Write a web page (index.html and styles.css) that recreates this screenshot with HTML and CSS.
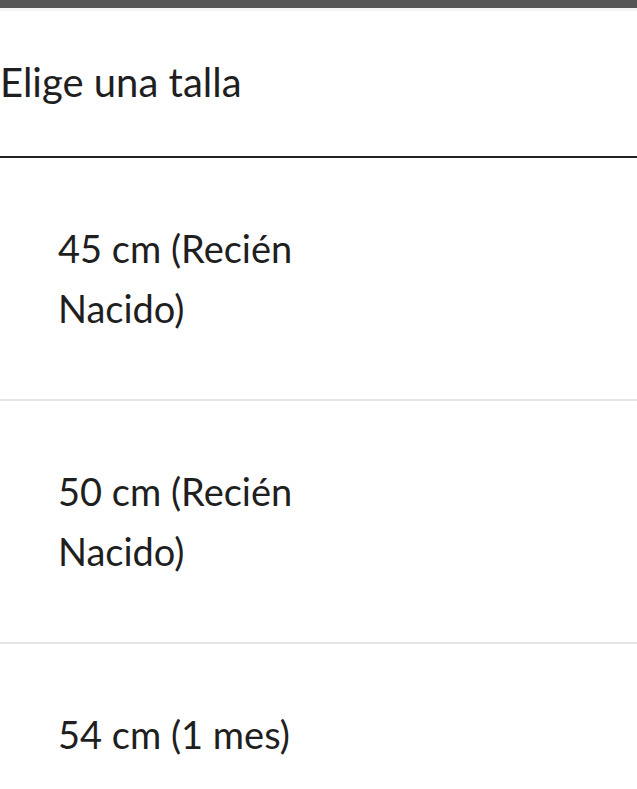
FILE: index.html
```html
<!DOCTYPE html>
<html>
  <head>
    <title>Elige una talla</title>
    <meta charset="UTF-8">
    <meta name="viewport" content="width=device-width,initial-scale=1">
    <link rel="stylesheet" href="styles.css">
  </head>
  <body>
    <div class="top_bar"></div>
    <div class="size_picker">
      <h2 class="picker_title">Elige una talla</h2>
      <ul class="size_list">
        <li class="size_item"><span class="size_label">45 cm (Recién Nacido)</span></li>
        <li class="size_item"><span class="size_label">50 cm (Recién Nacido)</span></li>
        <li class="size_item"><span class="size_label">54 cm (1 mes)</span></li>
      </ul>
    </div>
  </body>
</html>
```

FILE: styles.css
```css
body
{
  margin: 0;
  padding: 0;
  background-color: #ffffff;
  color: #1f1f1f;
  font-family: "Lato", "Liberation Sans", sans-serif;
  overflow: hidden;
}
.top_bar
{
  height: 8px;
  background-color: #555555;
  border-bottom: 3px solid #f4f4f4;
}
.picker_title
{
  margin: 0;
  padding: 41px 0 44px 0;
  font-size: 40px;
  line-height: 60px;
  font-weight: normal;
  border-bottom: 2px solid #222222;
}
.size_list
{
  list-style: none;
  margin: 0;
  padding: 0;
}
.size_item
{
  padding: 60px 0 61px 58px;
  font-size: 38px;
  line-height: 60px;
  border-bottom: 2px solid #e6e6e6;
}
.size_label
{
  display: block;
  max-width: 300px;
}
```
